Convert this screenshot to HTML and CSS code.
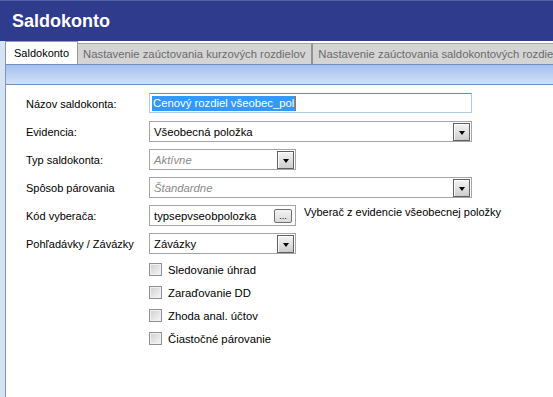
FILE: index.html
```html
<!DOCTYPE html>
<html>
	<head>
		<meta charset="UTF-8">
		<title>Saldokonto</title>
		<link rel="stylesheet" href="styles.css">
	</head>
	<body>
		<div class="header">Saldokonto</div>
		<div class="wrap">
			<div class="side"></div>
			<div class="main">
				<div class="tabs">
					<div class="tab active">Saldokonto</div>
					<div class="tab">Nastavenie zaúctovania kurzových rozdielov</div>
					<div class="tab">Nastavenie zaúctovania saldokontových rozdielov</div>
				</div>
				<div class="band"></div>

				<div class="form">
					<div class="row">
						<div class="lbl">Názov saldokonta:</div>
						<div class="field wide focus"><span class="sel">Cenový rozdiel všeobec_pol</span><span class="caret"></span></div>
					</div>
					<div class="row">
						<div class="lbl">Evidencia:</div>
						<div class="field wide"><span>Všeobecná položka</span><span class="drop"></span></div>
					</div>
					<div class="row">
						<div class="lbl">Typ saldokonta:</div>
						<div class="field narrow off"><span>Aktívne</span><span class="drop"></span></div>
					</div>
					<div class="row">
						<div class="lbl">Spôsob párovania</div>
						<div class="field wide off"><span>Štandardne</span><span class="drop"></span></div>
					</div>
					<div class="row">
						<div class="lbl">Kód vyberača:</div>
						<div class="field narrow"><span>typsepvseobpolozka</span><span class="dots">...</span></div>
						<div class="note">Vyberač z evidencie všeobecnej položky</div>
					</div>
					<div class="row">
						<div class="lbl">Pohľadávky / Závázky</div>
						<div class="field narrow"><span>Závázky</span><span class="drop"></span></div>
					</div>

					<div class="checks">
						<label class="check"><span class="box"></span>Sledovanie úhrad</label>
						<label class="check"><span class="box"></span>Zaraďovanie DD</label>
						<label class="check"><span class="box"></span>Zhoda anal. účtov</label>
						<label class="check"><span class="box"></span>Čiastočné párovanie</label>
					</div>
				</div>
			</div>
		</div>
	</body>
</html>
```

FILE: styles.css
```css
body{
	margin: 0;
	padding: 0;
	font-family: "Liberation Sans", Arial, sans-serif;
	font-size: 11px;
	color: #000;
	background: #fff;
}

.header{
	height: 31px;
	padding: 9px 0 0 12px;
	border-top: 1px solid #5560a6;
	background: #2f3b8d;
	color: #fff;
	font-size: 18px;
	font-weight: bold;
	line-height: 22px;
}

.wrap{
	display: flex;
	min-height: calc(100vh - 41px);
}
.side{
	width: 5px;
	background: #d6e3f2;
	border-right: 1px solid #8595b5;
}
.main{
	flex: 1;
	min-width: 0;
}

/* zalozky */
.tabs{
	display: flex;
	align-items: flex-end;
	height: 23px;
	white-space: nowrap;
	overflow: hidden;
}
.tab{
	height: 20px;
	line-height: 20px;
	padding: 0 6px 0 5px;
	background: #d4d4d4;
	color: #6b6b6b;
	border-top: 1px solid #a6a6a6;
	border-right: 2px solid #939393;
	font-size: 11.3px;
}
.tab.active{
	height: 22px;
	line-height: 22px;
	padding: 0 8px;
	background: #fff;
	color: #000;
	border-top: 1px solid #9a9a9a;
	border-right: 1px solid #9a9a9a;
	font-size: 11px;
}
.band{
	height: 19px;
	border-top: 1px solid #6f8fc5;
	border-bottom: 1px solid #6f8fc5;
	background: linear-gradient(#a5c0ef, #d2e0f8);
}

/* formular */
.form{
	padding: 8px 0 0 20px;
}
.row{
	display: flex;
	align-items: center;
	height: 21px;
	margin-bottom: 7px;
}
.lbl{
	width: 123px;
	flex-shrink: 0;
}
.field{
	box-sizing: border-box;
	display: flex;
	align-items: center;
	height: 21px;
	padding-left: 4px;
	border: 1px solid #a5a5a5;
	background: #fff;
	font-size: 11.3px;
}
.wide{
	width: 323px;
}
.narrow{
	width: 147px;
}
.off{
	color: #8a8a8a;
	font-style: italic;
}
.focus{
	height: 20px;
	align-self: flex-start;
	padding-left: 2px;
	border-color: #aecbe6;
	border-top-color: #5d8dc1;
}
.sel{
	background: #3399ff;
	color: #fff;
	line-height: 15px;
	padding: 0 1px;
}
.caret{
	width: 1px;
	height: 15px;
	background: #cc6a10;
}
.drop{
	box-sizing: border-box;
	width: 17px;
	height: 18px;
	margin: 0 1px 0 auto;
	padding-top: 7px;
	display: flex;
	justify-content: center;
	border: 1px solid #5f5f5f;
	background: linear-gradient(#f4f4f4, #cdcdcd);
	box-shadow: inset 1px 1px 0 #fff;
}
.drop:after{
	content: "";
	width: 0;
	height: 0;
	border-left: 3px solid transparent;
	border-right: 3px solid transparent;
	border-top: 4px solid #000;
}
.dots{
	box-sizing: border-box;
	width: 18px;
	height: 14px;
	margin: 0 3px 0 auto;
	border: 1px solid #707070;
	border-radius: 2px;
	background: linear-gradient(#f4f4f4, #d9d9d9);
	font-size: 9px;
	line-height: 13px;
	text-align: center;
	color: #000;
	font-style: normal;
}
.note{
	align-self: flex-start;
	margin-left: 8px;
	line-height: 14px;
}

.checks{
	padding-left: 123px;
	margin-top: -3px;
}
.check{
	display: flex;
	align-items: center;
	height: 23px;
	gap: 6px;
	font-size: 11.3px;
}
.box{
	box-sizing: border-box;
	width: 13px;
	height: 13px;
	border: 1px solid #8f8f8f;
	background: linear-gradient(135deg, #cfcfcf, #f7f7f7);
	box-shadow: inset 0 0 0 1px #f2f2f2;
}
```
